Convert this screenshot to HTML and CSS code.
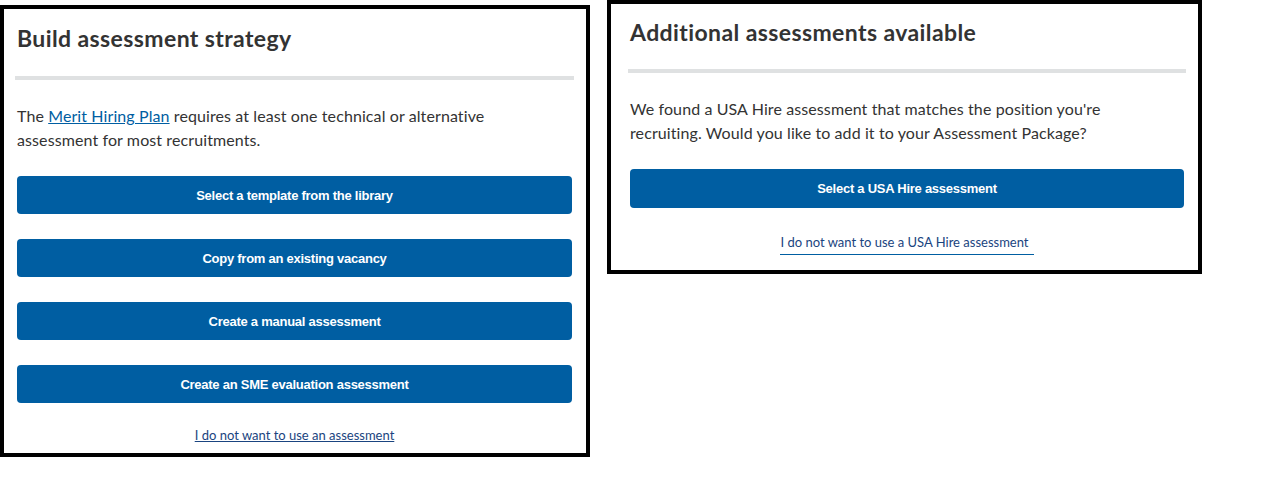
FILE: index.html
```html
<!DOCTYPE html>
<html lang="en">
<head>
    <meta charset="UTF-8">
    <meta name="viewport" content="width=device-width, initial-scale=1.0">
    <title>Assessment Strategy</title>
    <link rel="stylesheet" href="styles.css">
</head>
<body>
    <div class="panels">
        <!-- Strategy chooser -->
        <section class="panel panel-strategy">
            <h2 class="panel-title">Build assessment strategy</h2>
            <hr class="divider">
            <p class="panel-text">The <a href="#" class="inline-link">Merit Hiring Plan</a> requires at least one technical or alternative assessment for most recruitments.</p>
            <div class="actions">
                <button class="btn" type="button">Select a template from the library</button>
                <button class="btn" type="button">Copy from an existing vacancy</button>
                <button class="btn" type="button">Create a manual assessment</button>
                <button class="btn" type="button">Create an SME evaluation assessment</button>
            </div>
            <div class="skip">
                <a href="#" class="skip-link">I do not want to use an assessment</a>
            </div>
        </section>

        <!-- USA Hire suggestion -->
        <section class="panel panel-usahire">
            <h2 class="panel-title">Additional assessments available</h2>
            <hr class="divider">
            <p class="panel-text">We found a USA Hire assessment that matches the position you're recruiting. Would you like to add it to your Assessment Package?</p>
            <div class="actions">
                <button class="btn btn-tall" type="button">Select a USA Hire assessment</button>
            </div>
            <div class="skip skip-usahire">
                <a href="#" class="skip-link skip-link-bordered">I do not want to use a USA Hire assessment</a>
            </div>
        </section>
    </div>
</body>
</html>
```

FILE: styles.css
```css
* {
    margin: 0;
    padding: 0;
    box-sizing: border-box;
}

body {
    font-family: Lato, "Open Sans", sans-serif;
    background: #fff;
    color: #333;
}

.panels {
    display: flex;
    align-items: flex-start;
}

/* Card with heavy black frame */
.panel {
    background: #fff;
    border: 4px solid #000;
}

.panel-strategy {
    width: 590px;
    margin-top: 5px;
    padding: 15px 14px 8px 13px;
}

.panel-usahire {
    width: 595px;
    margin-left: 17px;
    padding: 14px 14px 15px 19px;
}

.panel-title {
    font-size: 23px;
    line-height: 28px;
    font-weight: 700;
    letter-spacing: 0.4px;
    color: #333;
}

.divider {
    border: none;
    height: 4px;
    background: #dfe1e2;
    margin: 24px -2px 0;
}

.panel-usahire .divider {
    margin-top: 23px;
}

.panel-text {
    max-width: 530px;
    margin-top: 24px;
    font-size: 16px;
    line-height: 24px;
    letter-spacing: 0.1px;
    color: #333;
}

.inline-link {
    color: #005ea2;
    text-decoration: underline;
}

/* Stacked full-width buttons */
.actions {
    display: flex;
    flex-direction: column;
    gap: 25px;
    margin-top: 24px;
}

.btn {
    height: 38px;
    width: 100%;
    background: #005ea2;
    color: #fff;
    border: none;
    border-radius: 4px;
    font-family: "Liberation Sans", Arial, sans-serif;
    font-size: 13px;
    font-weight: 700;
    letter-spacing: -0.25px;
    cursor: pointer;
}

.btn-tall {
    height: 39px;
}

.btn:hover {
    background: #1a4480;
}

.skip {
    margin-top: 22px;
    text-align: center;
    font-size: 13px;
    line-height: 20px;
}

.skip-usahire {
    margin-top: 24px;
}

.skip-link {
    color: #1a4480;
    text-decoration: underline;
}

.skip-link-bordered {
    text-decoration: none;
    display: inline-block;
    line-height: 18px;
    padding: 0 5px 3px 0;
    border-bottom: 1px solid #005ea2;
}
```
